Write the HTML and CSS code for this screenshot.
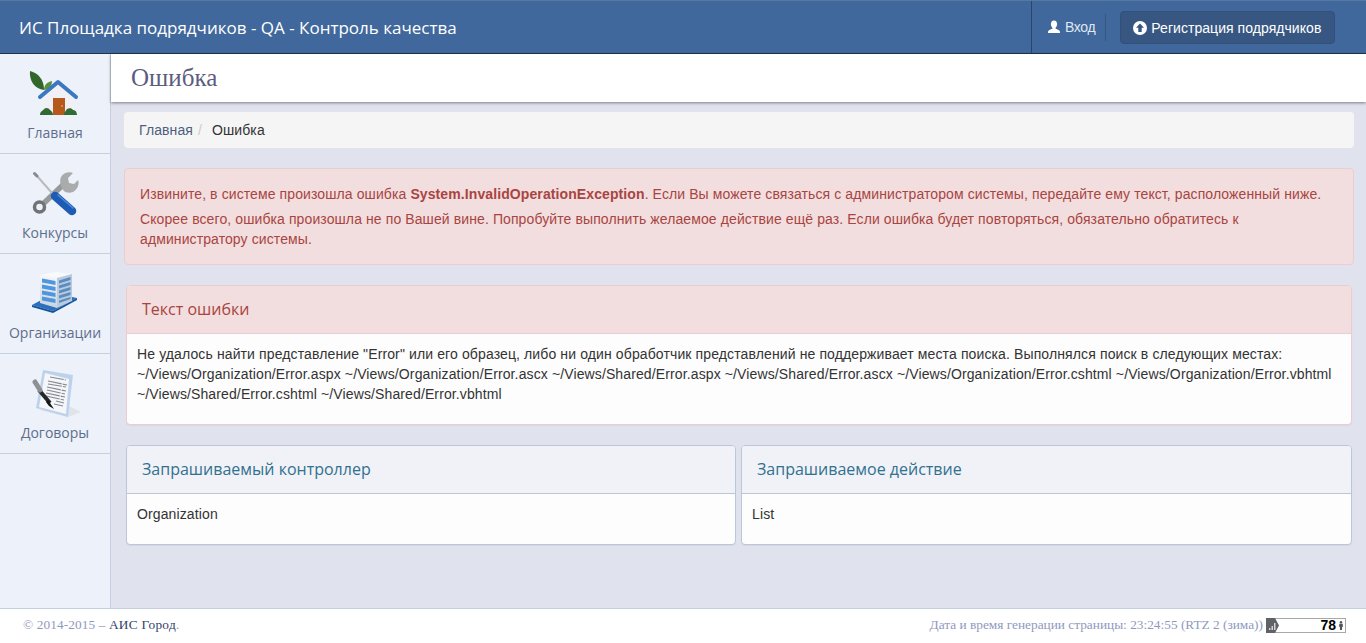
FILE: index.html
```html
<!DOCTYPE html>
<html lang="ru">
<head>
<meta charset="utf-8">
<title>Ошибка</title>
<link rel="stylesheet" href="styles.css">
</head>
<body>
<div class="page">
  <header class="topbar">
    <div class="brand">ИС Площадка подрядчиков - QA - Контроль качества</div>
    <div class="top-actions">
      <a class="login">
        <svg class="glyph" viewBox="0 0 14 14" width="14" height="14"><path fill="#fff" d="M7 0.5c2 0 3.1 1.6 3.1 3.5 0 1.6-.7 3-1.5 3.7v1.1c1.9.6 4.4 1.4 4.4 3v1.2H1v-1.2c0-1.6 2.500-2.400 4.400-3V7.700C4.600 7 3.900 5.600 3.900 4 3.900 2.100 5 .5 7 .5z"/></svg>
        <span>Вход</span>
      </a>
      <span class="sep"></span>
      <a class="register">
        <svg class="glyph" viewBox="0 0 14 14" width="14" height="14"><circle cx="7" cy="7" r="7" fill="#fff"/><path fill="#375782" d="M7 2.600 11 6.800H8.700V11H5.300V6.800H3z"/></svg>
        <span>Регистрация подрядчиков</span>
      </a>
    </div>
  </header>
  <div class="middle">
    <nav class="sidebar">
      <a class="nav-item">
        <svg class="nav-icon" viewBox="0 0 60 50" width="60" height="50">
          <path fill="#33662a" d="M5 1c8 2 14 8 14 19C10 19 4 11 5 1z"/>
          <path fill="#5d8f38" d="M19 20c0-5 3-8 8-9 0 5-3 8-8 9z"/>
          <path fill="#f1f0f4" d="M33 13 49 27V44H17V27z"/>
          <path fill="none" stroke="#3b78c2" stroke-width="4" stroke-linecap="round" stroke-linejoin="round" d="M15 27 33 12 51 27"/>
          <rect fill="#b5591d" x="28" y="28" width="12" height="17"/>
          <circle fill="#f3d27a" cx="37" cy="36" r="0.800"/>
          <path fill="#2f6b33" d="M15 45c0-4 3-4 4-6 2-2 5-1 6 1 2 1 3 3 3 5zM39 45c0-3 2-4 3-6 2-1 5-1 6 1 3 0 4 3 4 5z"/>
        </svg>
        <span>Главная</span>
      </a>
      <a class="nav-item">
        <svg class="nav-icon" viewBox="0 0 60 50" width="60" height="50">
          <path fill="none" stroke="#97999b" stroke-width="5.500" d="M19 33 41 12"/>
          <circle fill="none" stroke="#707274" stroke-width="3.500" cx="14.500" cy="37" r="5"/>
          <path fill="#a9abad" d="M36 7c2-4 8-6 12-4l-5 5 1 5 5 1 4-4c2 4-1 10-5 12-3 1-7 1-9-1-3-3-5-10-3-14z"/>
          <path fill="none" stroke="#b8babc" stroke-width="2" d="M27 23 12 6"/>
          <path fill="none" stroke="#86888a" stroke-width="3" stroke-linecap="round" d="M12 6 9.500 3.500"/>
          <path fill="none" stroke="#1c5cb2" stroke-width="8.500" stroke-linecap="round" d="M30 26 47 41"/>
          <path fill="none" stroke="#4c8be0" stroke-width="1.500" stroke-linecap="round" d="M33 25 48 38"/>
        </svg>
        <span>Конкурсы</span>
      </a>
      <a class="nav-item">
        <svg class="nav-icon" viewBox="0 0 60 50" width="60" height="50">
          <defs>
            <linearGradient id="tower" x1="0" y1="0" x2="0" y2="1">
              <stop offset="0" stop-color="#f6f7f9"/>
              <stop offset="1" stop-color="#c9d3df"/>
            </linearGradient>
          </defs>
          <path fill="#2a70bb" d="M7 35 20 28 42 26 52 28 28 41z"/>
          <path fill="#14539b" d="M7 35 28 41V43L7 37zM52 28 28 41V43L52 30z"/>
          <path fill="url(#tower)" d="M15 5 32 8 32 38 15 33z"/>
          <path fill="#f8f9fb" d="M15 5 30 2 47 4 32 8z"/>
          <path fill="#b9cbdf" d="M32 8 47 4 47 31 32 38z"/>
          <path fill="#4e96de" d="M17 8.500 30.500 11V15L17 12.500zM17 14.500 30.500 17V21L17 18.500zM17 20.500 30.500 23V27L17 24.500zM17 26.500 30.500 29V33L17 30.500z"/>
          <path fill="#5b8ebf" d="M34 10.500 45.500 7V10L34 13.500zM34 15.500 45.500 12V15L34 18.500zM34 20.500 45.500 17V20L34 23.500zM34 25.500 45.500 22V25L34 28.500zM34 30.500 45.500 27V29L34 33z"/>
        </svg>
        <span>Организации</span>
      </a>
      <a class="nav-item">
        <svg class="nav-icon" viewBox="0 0 60 50" width="60" height="50">
          <path fill="#e0e3ea" d="M14 40 43 47 56 42 44 36z"/>
          <path fill="#bcd2ec" d="M18 0 48 5 43 47 11 38z"/>
          <path fill="#f4f6fa" d="M20 3 44 9 41 44 14 37z"/>
          <path fill="none" stroke="#85888f" stroke-width="1.100" stroke-dasharray="14 1" d="M25 7 41 10M23 11 42 15M23 14 41 17M22 17 41 21M22 20 40 24M21 23 40 27M21 26 39 30M31 31 39 33M29 34 38 36"/>
          <path fill="none" stroke="#25262a" stroke-width="4" d="M14 20 25 33"/>
          <path fill="none" stroke="#8e9095" stroke-width="5" stroke-linecap="round" d="M10 12 15 20"/>
          <path fill="#151515" d="M23 30 27 36 29 39 24 36 21 32z"/>
        </svg>
        <span>Договоры</span>
      </a>
    </nav>
    <main class="content">
      <div class="title-bar"><h1>Ошибка</h1></div>
      <div class="content-body">
        <ol class="breadcrumb">
          <li class="crumb-link">Главная</li>
          <li class="crumb-slash">/</li>
          <li class="crumb-active">Ошибка</li>
        </ol>
        <div class="alert">
          <p>Извините, в системе произошла ошибка <b>System.InvalidOperationException</b>. Если Вы можете связаться с администратором системы, передайте ему текст, расположенный ниже.</p>
          <p class="alert-second">Скорее всего, ошибка произошла не по Вашей вине. Попробуйте выполнить желаемое действие ещё раз. Если ошибка будет повторяться, обязательно обратитесь к администратору системы.</p>
        </div>
        <section class="panel panel-danger">
          <h3 class="panel-head">Текст ошибки</h3>
          <div class="panel-body">Не удалось найти представление "Error" или его образец, либо ни один обработчик представлений не поддерживает места поиска. Выполнялся поиск в следующих местах: ~/Views/Organization/Error.aspx ~/Views/Organization/Error.ascx ~/Views/Shared/Error.aspx ~/Views/Shared/Error.ascx ~/Views/Organization/Error.cshtml ~/Views/Organization/Error.vbhtml ~/Views/Shared/Error.cshtml ~/Views/Shared/Error.vbhtml</div>
        </section>
        <div class="panel-row">
          <section class="panel panel-info">
            <h3 class="panel-head">Запрашиваемый контроллер</h3>
            <div class="panel-body">Organization</div>
          </section>
          <section class="panel panel-info">
            <h3 class="panel-head">Запрашиваемое действие</h3>
            <div class="panel-body">List</div>
          </section>
        </div>
      </div>
    </main>
  </div>
  <footer class="footer">
    <div class="footer-left">© 2014-2015 – <span class="footer-link">АИС Город</span>.</div>
    <div class="footer-right">
      <span>Дата и время генерации страницы: 23:24:55 (RTZ 2 (зима))</span>
      <span class="counter">
        <svg class="counter-tab" viewBox="0 0 14 15" width="14" height="15"><path fill="#5f6267" d="M0 0H9L13 7.500 9 15H0z"/><path fill="#d3d5d8" d="M3 10H4.500V12H3zM5.500 8H7V12H5.500zM8 5H9.500V12H8z"/></svg>
        <b>78</b>
        <svg class="counter-man" viewBox="0 0 6 11" width="6" height="11"><circle cx="3" cy="1.500" r="1.500" fill="#555"/><path fill="#555" d="M1 3.500H5L5.500 7H4.300V11H1.700V7H.5z"/></svg>
      </span>
    </div>
  </footer>
</div>
</body>
</html>
```

FILE: styles.css
```css
* {
  box-sizing: border-box;
}

html,
body {
  margin: 0;
  height: 100%;
  overflow: hidden;
}

body {
  font-family: "Liberation Sans", Arial, sans-serif;
  font-size: 14px;
  line-height: 20px;
  color: #333;
  background: #e0e3ee;
}

.page {
  display: flex;
  flex-direction: column;
  height: 643px;
}

.topbar {
  flex: 0 0 54px;
  display: flex;
  justify-content: space-between;
  background: #40689c;
  border-top: 1px solid #57789f;
  border-bottom: 1px solid #1f3450;
}

.brand {
  padding: 2px 0 0 19px;
  font-family: "Open Sans", sans-serif;
  font-size: 17px;
  line-height: 50px;
  color: #fff;
}

.top-actions {
  display: flex;
  align-items: center;
  width: 335px;
  padding-left: 15px;
  border-left: 1px solid #2a4566;
}

.glyph {
  flex: none;
}

.login {
  display: flex;
  align-items: center;
  gap: 4px;
  font-size: 14px;
  letter-spacing: -0.35px;
  color: #dfe7f2;
}

.sep {
  width: 1px;
  height: 27px;
  margin: 0 14px 0 10px;
  background: #36567f;
}

.register {
  display: flex;
  align-items: center;
  gap: 4px;
  width: 215px;
  height: 33px;
  padding: 1px 0 0 12px;
  background: #375782;
  border: 1px solid #32507a;
  border-radius: 4px;
  font-size: 14px;
  letter-spacing: 0.05px;
  color: #fff;
}

.middle {
  flex: 1;
  display: flex;
  min-height: 0;
}

.sidebar {
  flex: 0 0 111px;
  background: #edf1f9;
  border-right: 1px solid #c5d0de;
}

.nav-item {
  display: flex;
  flex-direction: column;
  align-items: center;
  height: 100px;
  padding-top: 16px;
  border-bottom: 1px solid #c5d0de;
  font-family: "Open Sans", sans-serif;
  font-size: 14px;
  line-height: 20px;
  color: #5d6e8c;
}

.nav-icon {
  flex: none;
  margin-bottom: 3px;
}

.content {
  flex: 1;
  min-width: 0;
}

.title-bar {
  height: 48px;
  padding-left: 20px;
  background: #fff;
  box-shadow: 0 1px 3px rgba(0, 0, 0, 0.45);
}

.title-bar h1 {
  margin: 0;
  font-family: "Liberation Serif", serif;
  font-size: 25px;
  font-weight: 400;
  line-height: 47px;
  color: #5c5c80;
}

.content-body {
  padding: 10px 12px 0 13px;
}

.breadcrumb {
  display: flex;
  height: 36px;
  margin: 0 0 20px;
  padding: 8px 15px;
  list-style: none;
  background: #f5f5f5;
  border-radius: 4px;
  letter-spacing: 0.1px;
}

.crumb-link {
  color: #4d5f80;
}

.crumb-slash {
  padding: 0 5px;
  margin-right: 5px;
  color: #ccc;
}

.crumb-active {
  color: #333;
}

.alert {
  height: 97px;
  margin-bottom: 20px;
  padding: 15px;
  color: #a94442;
  background: #f2dede;
  border: 1px solid #ebccd1;
  border-radius: 4px;
  letter-spacing: 0.1px;
}

.alert p {
  margin: 0;
}

.alert-second {
  padding-top: 5px;
}

.panel {
  background: #fdfdfd;
  border: 1px solid;
  border-radius: 4px;
  box-shadow: 0 1px 1px rgba(0, 0, 0, 0.05);
}

.panel-danger {
  margin: 0 2px 20px;
  border-color: #ebccd1;
}

.panel-info {
  border-color: #bcc6da;
}

.panel-head {
  height: 48px;
  margin: 0;
  padding-left: 15px;
  font-family: "Open Sans", sans-serif;
  font-size: 16px;
  font-weight: 400;
  line-height: 47px;
  border-bottom: 1px solid;
  border-radius: 3px 3px 0 0;
}

.panel-danger .panel-head {
  color: #a94442;
  background: #f2dede;
  border-color: #ebccd1;
}

.panel-info .panel-head {
  color: #31708f;
  background: #f0f2f7;
  border-color: #bcc6da;
}

.panel-body {
  padding: 10px 10px 20px;
  letter-spacing: 0.12px;
}

.panel-row {
  display: grid;
  grid-template-columns: 610px 1fr;
  gap: 5px;
  margin: 0 2px;
}

.footer {
  flex: 0 0 35px;
  display: flex;
  justify-content: space-between;
  padding: 7px 20px 0 23px;
  background: #fff;
  border-top: 1px solid #c5d0de;
  font-family: "Liberation Serif", serif;
  font-size: 13.33px;
  line-height: 18px;
  color: #8f99c0;
}

.footer-left {
  letter-spacing: 0.1px;
}

.footer-link {
  letter-spacing: 0.3px;
  color: #33436b;
}

.footer-right {
  display: flex;
  align-items: flex-start;
  gap: 3px;
}

.counter {
  display: flex;
  align-items: center;
  justify-content: flex-end;
  width: 80px;
  height: 15px;
  margin-top: 2px;
  padding-right: 1px;
  position: relative;
  background: #fff;
  border: 1px solid #a8a8a8;
  font-family: "Liberation Sans", Arial, sans-serif;
  font-size: 14px;
  line-height: 13px;
  color: #000;
}

.counter-tab {
  position: absolute;
  left: -1px;
  top: -1px;
}

.counter-man {
  margin-left: 2px;
  height: 9px;
}
```
